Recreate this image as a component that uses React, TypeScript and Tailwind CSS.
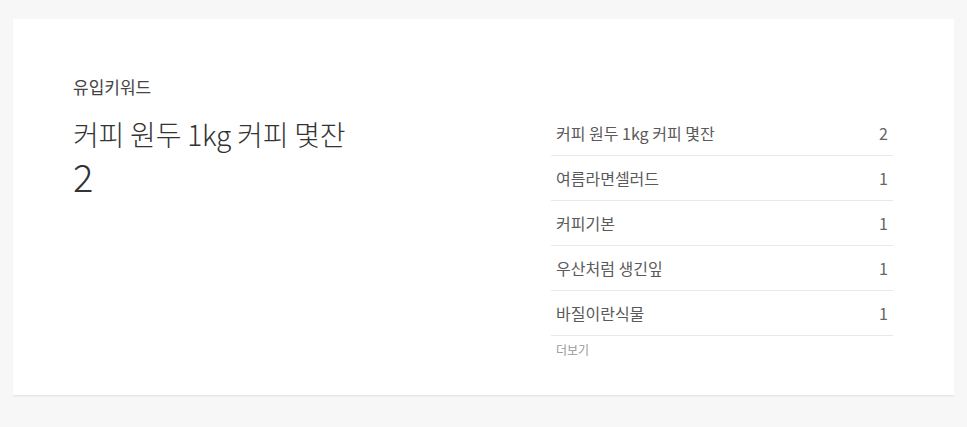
import React from 'react';

const keywords = [
  { label: '커피 원두 1kg 커피 몇잔', count: 2 },
  { label: '여름라면셀러드', count: 1 },
  { label: '커피기본', count: 1 },
  { label: '우산처럼 생긴잎', count: 1 },
  { label: '바질이란식물', count: 1 },
];

export default function App() {
  return (
    <div
      className="min-h-[427px] bg-[#f7f7f7] pt-[19px] px-[13px] pb-[30px]"
      style={{ fontFamily: '"Noto Sans CJK KR", "Noto Sans", sans-serif' }}
    >
      {/* 유입 키워드 카드 */}
      <div className="bg-white h-[377px] border-b border-[#e8e8e8] shadow-[0_1px_1px_rgba(0,0,0,0.03)] pl-[60px] pr-[61px] pt-[56px]">
        <h3 className="text-[17px] leading-[24px] text-[#444] font-normal">유입키워드</h3>

        <div className="flex mt-[11px]">
          <div className="flex-1 pt-[4px]">
            <p className="text-[28px] leading-[40px] font-light text-[#333] tracking-[-0.2px]">
              {keywords[0].label}
            </p>
            <p className="text-[38px] leading-[44px] font-light text-[#333]">
              {keywords[0].count}
            </p>
          </div>

          <div className="w-[342px] pt-[1px]">
            <ul>
              {keywords.map((k) => (
                <li
                  key={k.label}
                  className="flex items-center justify-between h-[45px] border-b border-[#e9e9e9] pl-[5px] pr-[5px] text-[16px] text-[#5a5a5a]"
                >
                  <span>{k.label}</span>
                  <span className="text-[#666]">{k.count}</span>
                </li>
              ))}
            </ul>
            <button type="button" className="mt-[2px] pl-[5px] text-[12px] leading-[20px] text-[#999]">
              더보기
            </button>
          </div>
        </div>
      </div>
    </div>
  );
}
